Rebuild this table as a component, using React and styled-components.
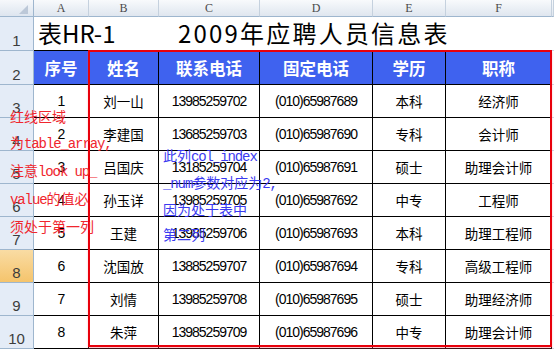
import React from 'react'
import styled, { createGlobalStyle } from 'styled-components'

const GlobalStyle = createGlobalStyle`
  html, body {
    margin: 0;
    padding: 0;
    background: #fff;
  }
  body {
    width: 554px;
    height: 349px;
    overflow: hidden;
    font-family: "Liberation Sans", "Noto Sans CJK SC", sans-serif;
  }
`

const HEADERS = ['序号', '姓名', '联系电话', '固定电话', '学历', '职称']

const ROWS = [
    ['1', '刘一山', '13985259702', '(010)65987689', '本科', '经济师'],
    ['2', '李建国', '13685259703', '(010)65987690', '专科', '会计师'],
    ['3', '吕国庆', '13185259704', '(010)65987691', '硕士', '助理会计师'],
    ['4', '孙玉详', '13985259705', '(010)65987692', '中专', '工程师'],
    ['5', '王建', '13985259706', '(010)65987693', '本科', '助理工程师'],
    ['6', '沈国放', '13885259707', '(010)65987694', '专科', '高级工程师'],
    ['7', '刘情', '13985259708', '(010)65987695', '硕士', '助理经济师'],
    ['8', '朱萍', '13985259709', '(010)65987696', '中专', '助理会计师'],
]

const Sheet = styled.div`
    position: relative;
    display: grid;
    grid-template-columns: 34px 55px 70px 101px 113px 73px 106px 1fr;
    grid-template-rows: 17px 34px 34px repeat(8, 33px);
    width: 554px;
    height: 349px;
    overflow: hidden;
`
const Corner = styled.div`
    position: relative;
    background: linear-gradient(#f6f8fb, #dde5ef);
    border-right: 1px solid #9eb6ce;
    border-bottom: 1px solid #9eb6ce;
    box-sizing: border-box;

    &::after{
        content: '';
        position: absolute;
        right: 5px;
        bottom: 2px;
        border-left: 9px solid transparent;
        border-bottom: 9px solid #bcc8d8;
    }
`
const ColHead = styled.div`
    display: flex;
    justify-content: center;
    align-items: center;
    background: linear-gradient(#f8fafc, #dfe6ef);
    border-right: 1px solid #c5d1de;
    border-bottom: 1px solid #9eb6ce;
    box-sizing: border-box;
    font-family: "Liberation Serif", serif;
    font-size: 12px;
    color: #4a4a4a;
`
const RowHead = styled.div`
    display: flex;
    justify-content: center;
    align-items: flex-end;
    padding-bottom: 1px;
    background: ${props => props.$selected ? 'linear-gradient(#f9dca4, #f5c46c)' : '#e4ecf7'};
    border-right: 1px solid #9eb6ce;
    border-bottom: 1px solid #9eb6ce;
    box-sizing: border-box;
    font-family: "Liberation Sans", sans-serif;
    font-size: 15px;
    color: #3c3c3c;
`
const TitleCell = styled.div`
    grid-column: span 6;
    display: flex;
    align-items: flex-end;
    padding: 0 0 1px 4px;
    border-bottom: 1px solid #000;
    box-sizing: border-box;
    font-family: "Noto Sans CJK SC", sans-serif;
    font-size: 24px;
    line-height: 32px;
    color: #000;
`
const TitleCode = styled.span`
    width: 140px;
`
const TitleMain = styled.span`
    letter-spacing: 2.2px;
`
const Blank = styled.div`
    border-bottom: 1px solid #d0d7e5;
    box-sizing: border-box;
`
const HeadCell = styled.div`
    display: flex;
    justify-content: center;
    align-items: center;
    background: #3f62ef;
    border-right: 1px solid #000;
    border-bottom: 1px solid #000;
    box-sizing: border-box;
    font-family: "Noto Sans CJK SC", sans-serif;
    font-weight: 700;
    font-size: 16.5px;
    color: #fff;
`
const DataCell = styled.div`
    display: flex;
    justify-content: center;
    align-items: center;
    border-right: 1px solid #000;
    border-bottom: 1px solid #000;
    box-sizing: border-box;
    font-family: ${props => props.$num ? '"Liberation Sans", sans-serif' : '"Noto Sans CJK SC", sans-serif'};
    font-size: ${props => props.$num ? '14px' : '13.5px'};
    letter-spacing: ${props => props.$num ? '-1px' : '0'};
    color: #000;
`
const RedFrame = styled.div`
    position: absolute;
    left: 88px;
    top: 50px;
    width: 464px;
    height: 297px;
    border: 2px solid #e8000b;
    box-sizing: border-box;
    box-shadow: 0 2px 2px rgba(255, 90, 110, 0.35);
    pointer-events: none;
`
const Note = styled.div`
    position: absolute;
    left: ${props => props.$x}px;
    top: ${props => props.$y}px;
    display: flex;
    flex-direction: column;
    font-family: "Noto Sans CJK SC", sans-serif;
    font-size: 14px;
    line-height: ${props => props.$lh}px;
    color: ${props => props.$color};
    white-space: pre;
`
const Latin = styled.span`
    font-family: "Liberation Mono", monospace;
    letter-spacing: -1.1px;
`

const isNum = (i) => i === 0 || i === 2 || i === 3

export default function App() {
    return (
        <>
            <GlobalStyle />
            <Sheet>
                <Corner />
                {['A', 'B', 'C', 'D', 'E', 'F', ''].map((c, i) => (
                    <ColHead key={i}>{c}</ColHead>
                ))}

                <RowHead>1</RowHead>
                <TitleCell>
                    <TitleCode>表HR-1</TitleCode>
                    <TitleMain>2009年应聘人员信息表</TitleMain>
                </TitleCell>
                <Blank />

                <RowHead>2</RowHead>
                {HEADERS.map(h => <HeadCell key={h}>{h}</HeadCell>)}
                <Blank />

                {ROWS.map((row, r) => (
                    <React.Fragment key={r}>
                        <RowHead $selected={r + 3 === 8}>{r + 3}</RowHead>
                        {row.map((v, i) => (
                            <DataCell key={i} $num={isNum(i)}>{v}</DataCell>
                        ))}
                        <Blank />
                    </React.Fragment>
                ))}

                <RedFrame />

                <Note $x={10} $y={103} $lh={26} $color="#f0262e">
                    <span>红线区域</span>
                    <span>为<Latin>table_array,</Latin></span>
                    <span>注意<Latin>look up_</Latin></span>
                    <span><Latin>value</Latin>的值必</span>
                    <span>须处于第一列</span>
                </Note>

                <Note $x={163} $y={143} $lh={25} $color="#3a3af0">
                    <span>此列<Latin>col_index</Latin></span>
                    <span><Latin>_num</Latin>参数对应为<Latin>2,</Latin></span>
                    <span>因为处于表中</span>
                    <span>第二列</span>
                </Note>
            </Sheet>
        </>
    )
}
